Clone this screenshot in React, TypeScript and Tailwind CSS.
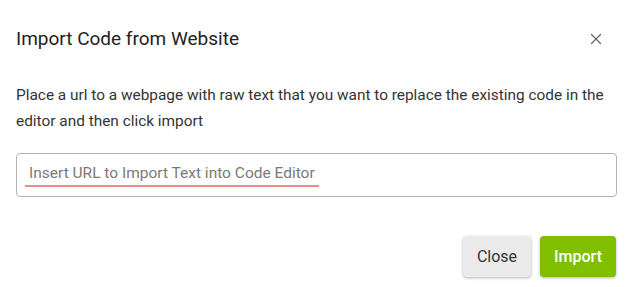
import { X } from 'lucide-react'

export default function App() {
  return (
    <div className="w-[633px] h-[287px] bg-white font-['Roboto',sans-serif] text-[#212121] flex flex-col">
      {/* Header */}
      <div className="flex items-center justify-between pl-4 pr-[28px] pt-[26px] h-[52px]">
        <h2 className="text-[19px] leading-[24px] text-[#222]">Import Code from Website</h2>
        <button className="text-[#666]" aria-label="Close">
          <X size={18} strokeWidth={1.7} />
        </button>
      </div>

      {/* Body */}
      <div className="px-4 pt-[30px]">
        <p className="text-[15.4px] leading-[26px] text-[#333]">
          Place a url to a webpage with raw text that you want to replace the existing code in the editor and then click import
        </p>
        <div className="mt-[19px] h-[44px] border border-[#b3b3b3] rounded-[4px] flex items-center px-3">
          <span className="text-[15.5px] text-[#7a7a7a] border-b-2 border-[#f08c8c] pb-[2px] px-1 -ml-1 leading-[20px]">
            Insert URL to Import Text into Code Editor
          </span>
        </div>
      </div>

      {/* Footer */}
      <div className="flex justify-end gap-[9px] px-[17px] pt-[39px]">
        <button className="h-[41px] px-[14px] rounded-[4px] bg-[#ebebeb] text-[#333] text-[16px] shadow-[0_1px_3px_rgba(0,0,0,0.3)]">
          Close
        </button>
        <button className="h-[41px] px-[14px] rounded-[4px] bg-[#7fbf00] text-white text-[16px] font-medium shadow-[0_1px_3px_rgba(0,0,0,0.3)]">
          Import
        </button>
      </div>
    </div>
  )
}
